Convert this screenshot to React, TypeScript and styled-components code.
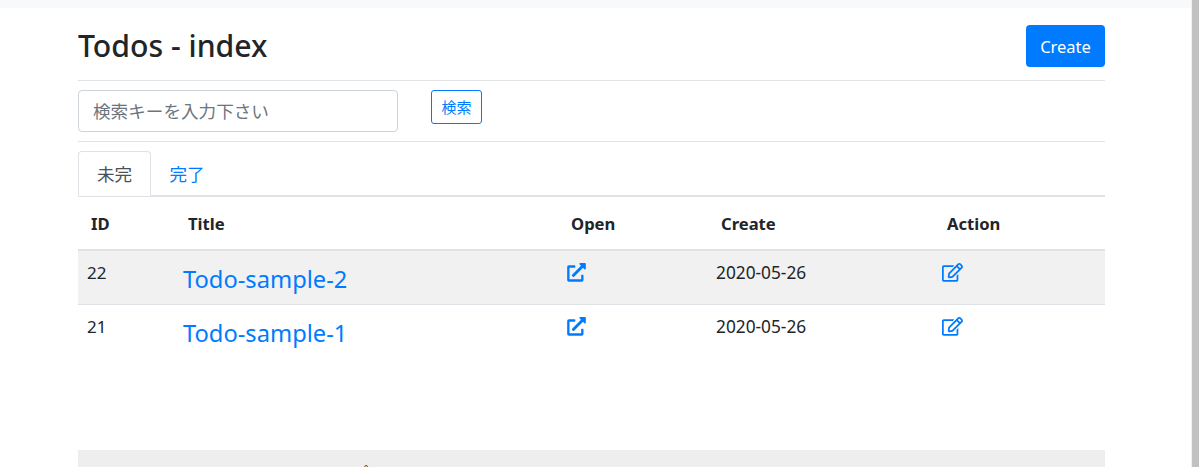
import React from "react";
import styled, { createGlobalStyle } from "styled-components";
import { FaExternalLinkAlt, FaRegEdit } from "react-icons/fa";

const Global = createGlobalStyle`
  html, body { margin: 0; padding: 0; height: 467px; overflow: hidden; background: #fff; }
  body { font-family: "Noto Sans", "Noto Sans CJK JP", sans-serif; font-size: 16px; color: #212529; }
`;

const Page = styled.div`
  display: flex;
  height: 467px;
  overflow: hidden;
`;
const Main = styled.div`
  flex: 1;
  min-width: 0;
  border-top: 8px solid #f8f9fa;
  padding: 0 86px 0 78px;
`;
const Scrollbar = styled.div`
  width: 7px;
  border-left: 1px solid #f0f0f0;
  background: #c1c1c1;
`;
const Header = styled.header`
  display: flex;
  justify-content: space-between;
  align-items: center;
  height: 73px;
  box-sizing: border-box;
  padding-top: 4px;
  border-bottom: 1px solid #e2e3e5;
`;
const Title = styled.h1`
  margin: 0;
  font-size: 30.2px;
  font-weight: 500;
  line-height: 1.2;
`;
const CreateButton = styled.button`
  height: 42px;
  width: 79px;
  background: #007bff;
  color: #fff;
  border: 0;
  border-radius: 4px;
  font: inherit;
  font-size: 16.5px;
  padding: 0;
`;
const SearchRow = styled.form`
  display: flex;
  align-items: flex-start;
  gap: 33px;
  height: 61px;
  padding-top: 9px;
  box-sizing: border-box;
  border-bottom: 1px solid #e2e3e5;
`;
const SearchInput = styled.input`
  width: 320px;
  height: 42px;
  box-sizing: border-box;
  border: 1px solid #ced4da;
  border-radius: 4px;
  padding: 0 14px;
  font: inherit;
  font-size: 17.6px;
  &::placeholder { color: #6c757d; opacity: 1; }
`;
const SearchButton = styled.button`
  width: 51px;
  height: 34px;
  box-sizing: border-box;
  background: #fff;
  color: #007bff;
  border: 1px solid #007bff;
  border-radius: 3px;
  font: inherit;
  font-size: 15px;
  padding: 0 0 2px;
`;
const Tabs = styled.nav`
  display: flex;
  margin-top: 9px;
  height: 45px;
  box-sizing: border-box;
  border-bottom: 1px solid #dee2e6;
`;
const Tab = styled.a<{ $active?: boolean }>`
  display: flex;
  align-items: center;
  justify-content: center;
  box-sizing: border-box;
  width: ${(p) => (p.$active ? "73px" : "72px")};
  height: 45px;
  color: ${(p) => (p.$active ? "#495057" : "#007bff")};
  background: ${(p) => (p.$active ? "#fff" : "transparent")};
  border: 1px solid ${(p) => (p.$active ? "#dee2e6" : "transparent")};
  border-bottom-color: ${(p) => (p.$active ? "#fff" : "transparent")};
  border-radius: 4px 4px 0 0;
  font-size: 17.6px;
`;
const Table = styled.div`
  display: flex;
  flex-direction: column;
`;
const grid = `
  display: grid;
  grid-template-columns: 105px 383px 150px 226px 1fr;
`;
const HeadRow = styled.div`
  ${grid}
  height: 55px;
  box-sizing: border-box;
  border-top: 1px solid #dee2e6;
  border-bottom: 2px solid #dee2e6;
  align-items: center;
`;
const HeadCell = styled.div`
  font-weight: 700;
  font-size: 16.6px;
  padding-left: 13px;
  &:nth-child(n + 2) { padding-left: 5px; }
`;
const Row = styled.div<{ $striped?: boolean }>`
  ${grid}
  height: 54px;
  box-sizing: border-box;
  background: ${(p) => (p.$striped ? "#f1f1f1" : "transparent")};
  border-bottom: ${(p) => (p.$striped ? "1px solid #dee2e6" : "0")};
`;
const Cell = styled.div`
  font-size: 17px;
  padding: 10px 0 0 9px;
  &:nth-child(n + 2) { padding-left: 0; }
`;
const DateCell = styled(Cell)`
  font-size: 17.3px;
`;
const TitleLink = styled.a`
  display: block;
  color: #007bff;
  font-size: 23.7px;
  line-height: 1.2;
  margin-top: 4px;
`;
const IconLink = styled.span`
  display: block;
  color: #007bff;
  margin-top: 2px;
  svg { display: block; width: 21px; height: 18.67px; }
`;
const Footer = styled.div`
  margin-top: 91px;
  height: 60px;
  background: #eeeeee;
  padding: 12px 0 0 275px;
  font-size: 15px;
  line-height: 20px;
  box-sizing: border-box;
`;

const rows = [
  { id: 22, title: "Todo-sample-2", striped: true },
  { id: 21, title: "Todo-sample-1", striped: false },
];

export default function App() {
  return (
    <Page>
      <Global />
      <Main>
        <Header>
          <Title>Todos - index</Title>
          <CreateButton>Create</CreateButton>
        </Header>
        <SearchRow>
          <SearchInput placeholder="検索キーを入力下さい" />
          <SearchButton type="button">検索</SearchButton>
        </SearchRow>
        <Tabs>
          <Tab $active>未完</Tab>
          <Tab>完了</Tab>
        </Tabs>
        <Table>
          <HeadRow>
            <HeadCell>ID</HeadCell>
            <HeadCell>Title</HeadCell>
            <HeadCell>Open</HeadCell>
            <HeadCell>Create</HeadCell>
            <HeadCell>Action</HeadCell>
          </HeadRow>
          {rows.map((r) => (
            <Row key={r.id} $striped={r.striped}>
              <Cell>{r.id}</Cell>
              <Cell><TitleLink>{r.title}</TitleLink></Cell>
              <Cell><IconLink><FaExternalLinkAlt /></IconLink></Cell>
              <DateCell>2020-05-26</DateCell>
              <Cell><IconLink><FaRegEdit /></IconLink></Cell>
            </Row>
          ))}
        </Table>
        <Footer>プ</Footer>
      </Main>
      <Scrollbar />
    </Page>
  );
}
